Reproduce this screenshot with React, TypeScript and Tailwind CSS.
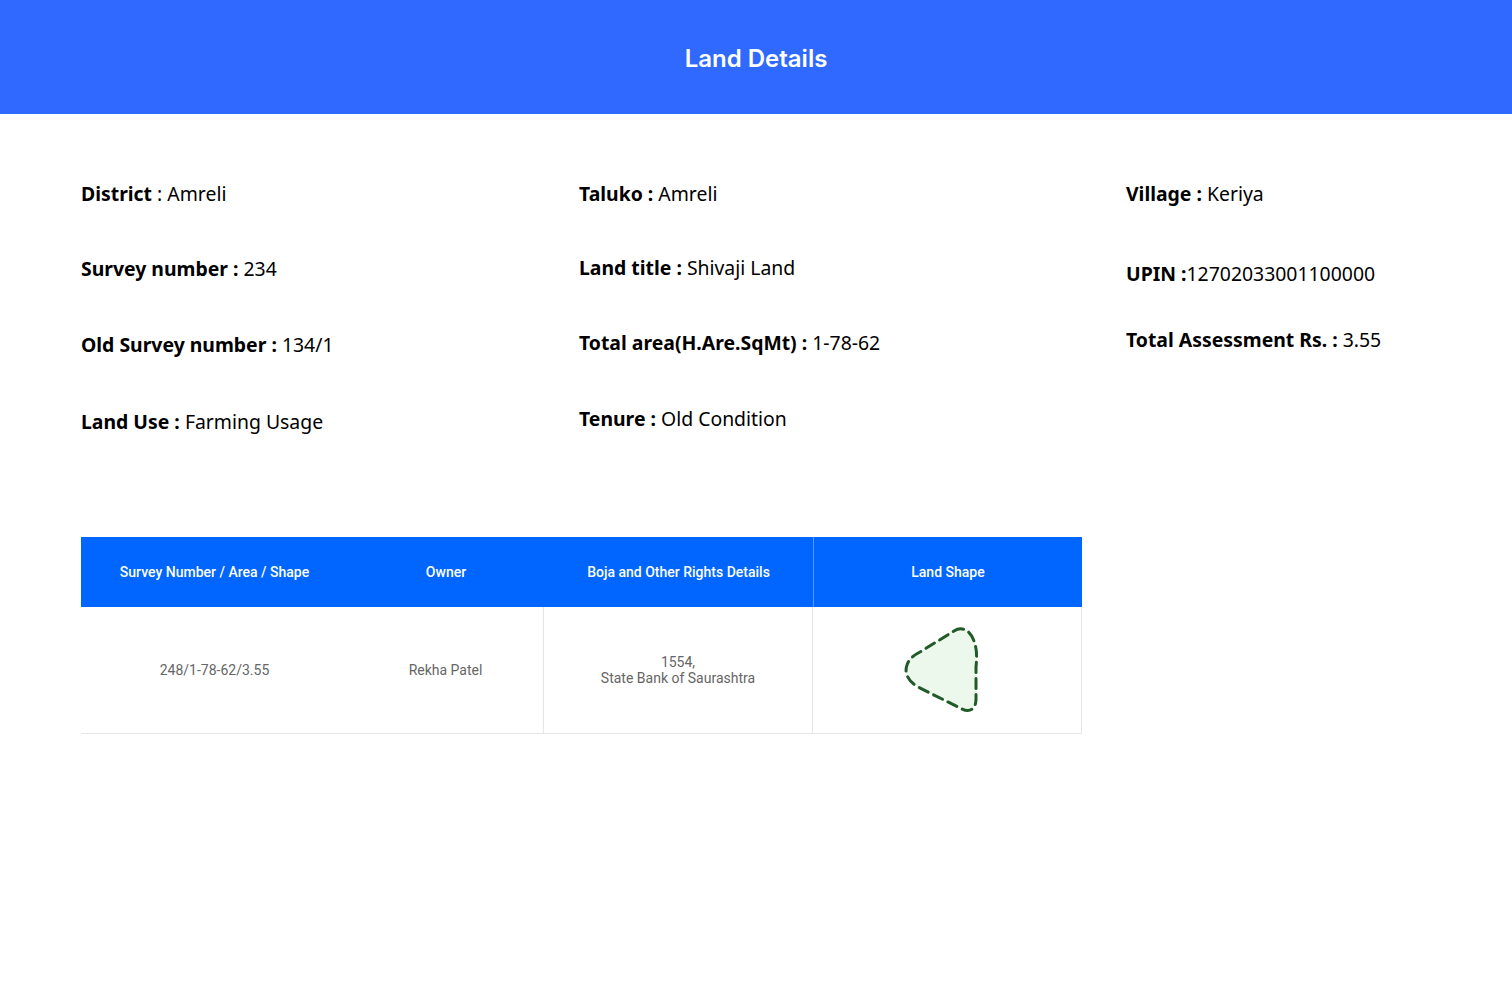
import React from "react";

type Field = { label: string; value: string; mt: string; lightColon?: boolean };

const col1: Field[] = [
  { label: "District", value: "Amreli", mt: "mt-0", lightColon: true },
  { label: "Survey number", value: "234", mt: "mt-[47px]" },
  { label: "Old Survey number", value: "134/1", mt: "mt-[48px]" },
  { label: "Land Use", value: "Farming Usage", mt: "mt-[49px]" },
];

const col2: Field[] = [
  { label: "Taluko", value: "Amreli", mt: "mt-0" },
  { label: "Land title", value: "Shivaji Land", mt: "mt-[46px]" },
  { label: "Total area(H.Are.SqMt)", value: "1-78-62", mt: "mt-[47px]" },
  { label: "Tenure", value: "Old Condition", mt: "mt-[48px]" },
];

const col3: Field[] = [
  { label: "Village", value: "Keriya", mt: "mt-0" },
  { label: "UPIN", value: "12702033001100000", mt: "mt-[52px]" },
  { label: "Total Assessment Rs.", value: "3.55", mt: "mt-[38px]" },
];

function InfoColumn({ fields }: { fields: Field[] }) {
  return (
    <div className="flex flex-col">
      {fields.map((f) => (
        <div key={f.label} className={`${f.mt} text-[19.4px] leading-[28px] text-black`}>
          {f.lightColon ? (
            <>
              <span className="font-bold">{f.label}</span>
              <span> : {f.value}</span>
            </>
          ) : (
            <>
              <span className="font-bold">
                {f.label}
                {f.label === "UPIN" ? " :" : " : "}
              </span>
              <span>{f.value}</span>
            </>
          )}
        </div>
      ))}
    </div>
  );
}

function LandShape() {
  return (
    <svg width="78" height="88" viewBox="0 0 78 88" fill="none" className="mr-[11px]">
      <path
        d="M51 5 C59 0 67 4 71 15 C74 23 74 31 73 41 L73 73 C73 83 67 87 59 83 L15 61 C5 55 1 47 4 39 C6 33 11 29 17 26 Z"
        fill="#ecf8ec"
        stroke="#1f5a27"
        strokeWidth="3"
        strokeDasharray="10 6"
        strokeLinecap="round"
        strokeLinejoin="round"
      />
    </svg>
  );
}

export default function App() {
  return (
    <div className="min-h-screen bg-white" style={{ fontFamily: '"Noto Sans", sans-serif' }}>
      <header className="h-[114px] bg-[#2f69ff] flex items-center justify-center pt-[4px]">
        <h1 className="text-white text-[24px] font-semibold" style={{ fontFamily: "Inter, sans-serif" }}>
          Land Details
        </h1>
      </header>

      <div className="pl-[81px] pt-[66px] grid grid-cols-[498px_547px_1fr]">
        <InfoColumn fields={col1} />
        <InfoColumn fields={col2} />
        <InfoColumn fields={col3} />
      </div>

      <div className="ml-[81px] mt-[101px] w-[1001px]" style={{ fontFamily: "Roboto, sans-serif" }}>
        <div className="grid grid-cols-[267px_196px_269px_269px] h-[70px] bg-[#0066ff] text-white text-[14px] font-medium">
          <div className="flex items-center justify-center">Survey Number / Area / Shape</div>
          <div className="flex items-center justify-center">Owner</div>
          <div className="flex items-center justify-center">Boja and Other Rights Details</div>
          <div className="flex items-center justify-center border-l border-[#5a9bff]">Land Shape</div>
        </div>
        <div className="grid grid-cols-[267px_196px_269px_269px] h-[127px] text-[14px] text-[#666666] border-b border-[#e6e6e6]">
          <div className="flex items-center justify-center">248/1-78-62/3.55</div>
          <div className="flex items-center justify-center border-r border-[#e6e6e6]">Rekha Patel</div>
          <div className="flex flex-col items-center justify-center text-center leading-[16px] border-r border-[#e6e6e6]">
            <span>1554,</span>
            <span>State Bank of Saurashtra</span>
          </div>
          <div className="flex items-center justify-center border-r border-[#e6e6e6]">
            <LandShape />
          </div>
        </div>
      </div>
    </div>
  );
}
